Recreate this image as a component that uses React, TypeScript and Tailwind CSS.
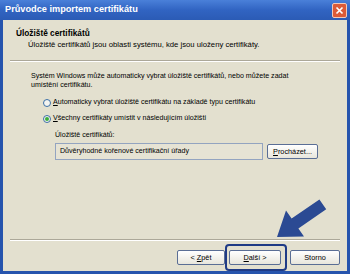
const font = { fontFamily: 'Tahoma, "Liberation Sans", Arial, sans-serif' };

function XpButton({ children, width }: { children: React.ReactNode; width: string }) {
    return (
        <div
            className={`${width} h-[15px] flex items-center justify-center rounded-[2px] border border-[#5a6e95] bg-gradient-to-b from-[#ffffff] to-[#e8e6dc] text-[7.3px] text-black leading-none`}
        >
            {children}
        </div>
    );
}

function Radio({ checked }: { checked?: boolean }) {
    return (
        <div className="w-[8px] h-[8px] rounded-full border border-[#3b6ea5] bg-[#f4f4f0] flex items-center justify-center shrink-0">
            {checked && <div className="w-[4px] h-[4px] rounded-full bg-[#3cae3c]" />}
        </div>
    );
}

export default function App() {
    return (
        <div className="w-[350px] h-[274px] flex flex-col bg-[#2654ad] relative overflow-hidden select-none" style={font}>
            {/* title bar */}
            <div className="h-[20px] flex items-center justify-between pl-[5px] pr-[3px] bg-gradient-to-b from-[#4a80d9] via-[#3164c2] to-[#2b5bb5]">
                <span className="text-white font-bold text-[9.2px] leading-none">Průvodce importem certifikátu</span>
                <div className="w-[15px] h-[15px] rounded-[2px] border border-[#f3c9b8] bg-[#dc5b38] flex items-center justify-center">
                    <svg width="9" height="9" viewBox="0 0 9 9">
                        <path d="M1.5 1.5 L7.5 7.5 M7.5 1.5 L1.5 7.5" stroke="white" strokeWidth="1.7" />
                    </svg>
                </div>
            </div>

            {/* client area */}
            <div className="flex-1 mx-[3px] mb-[3px] bg-[#e3e0cf] flex flex-col text-black">
                {/* header */}
                <div className="h-[40px] pt-[8px] pl-[13px]">
                    <div className="font-bold text-[8.3px] leading-[10px]">Úložiště certifikátů</div>
                    <div className="pl-[12px] text-[7.7px] leading-[10px] mt-[2px]">
                        Úložiště certifikátů jsou oblasti systému, kde jsou uloženy certifikáty.
                    </div>
                </div>
                <div className="mx-[7px] h-[2px] border-t border-[#aca899] border-b border-b-white" />

                {/* body */}
                <div className="h-[177px] pl-[28px] pt-[10px] text-[7.1px]">
                    <div className="leading-[9px]">
                        Systém Windows může automaticky vybrat úložiště certifikátů, nebo můžete zadat
                        <br />
                        umístění certifikátu.
                    </div>
                    <div className="flex items-center gap-[2px] mt-[9px] ml-[12px] h-[8px]">
                        <Radio />
                        <span className="leading-none"><u>A</u>utomaticky vybrat úložiště certifikátu na základě typu certifikátu</span>
                    </div>
                    <div className="flex items-center gap-[2px] mt-[8px] ml-[12px] h-[8px]">
                        <Radio checked />
                        <span className="leading-none"><u>V</u>šechny certifikáty umístit v následujícím úložišti</span>
                    </div>
                    <div className="ml-[24px] mt-[9px] leading-none">Úložiště certifikátů:</div>
                    <div className="ml-[24px] mt-[4px] flex items-center gap-[4px]">
                        <div className="w-[208px] h-[17px] border border-[#93a4c0] bg-[#e6e3d4] flex items-center pl-[4px] leading-none">
                            Důvěryhodné kořenové certifikační úřady
                        </div>
                        <XpButton width="w-[51px]">
                            <span><u>P</u>rocházet...</span>
                        </XpButton>
                    </div>
                </div>

                <div className="mx-[7px] h-[2px] border-t border-[#aca899] border-b border-b-white" />

                {/* buttons */}
                <div className="flex-1 flex justify-end items-start pt-[9px] pr-[7px]">
                    <XpButton width="w-[48px]">
                        <span>&lt; <u>Z</u>pět</span>
                    </XpButton>
                    <div className="relative ml-[4px]">
                        <XpButton width="w-[52px]">
                            <span><u>D</u>alší &gt;</span>
                        </XpButton>
                        <div className="absolute -left-[4px] -right-[6px] -top-[6px] -bottom-[6px] rounded-[4px] border-2 border-[#1f3b86]" />
                    </div>
                    <div className="ml-[9px]">
                        <XpButton width="w-[50px]">
                            <span>Storno</span>
                        </XpButton>
                    </div>
                </div>
            </div>

            {/* annotation arrow */}
            <svg className="absolute left-0 top-0 pointer-events-none" width="350" height="274" viewBox="0 0 350 274">
                <polygon
                    points="277,237 286,210.5 291.6,218.6 319.4,199.4 326.2,209.3 298.4,228.5 304,236.6"
                    fill="#2b4a93"
                />
            </svg>
        </div>
    );
}
